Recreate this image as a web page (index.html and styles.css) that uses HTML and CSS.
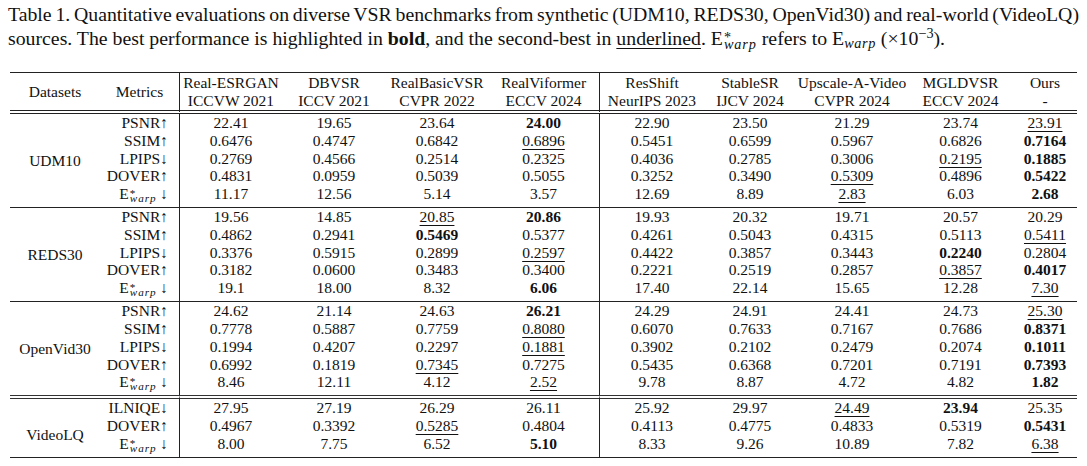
FILE: index.html
```html
<!DOCTYPE html>
<html>
<head>
<meta charset="utf-8">
<link rel="stylesheet" href="styles.css">
</head>
<body>
<div class="caption">
  <div class="cap-l1">Table 1. Quantitative evaluations on diverse VSR benchmarks from synthetic (UDM10, REDS30, OpenVid30) and real-world (VideoLQ)</div>
  <div class="cap-l2">sources. The best performance is highlighted in <b>bold</b>, and the second-best in <span class="u">underlined</span>. <span class="ew">E<span class="ss"><span class="sp">*</span><span class="sb">warp</span></span></span> refers to E<span class="sbi">warp</span> (×10<sup class="exp">−3</sup>).</div>
</div>

<table class="res">
  <colgroup>
    <col class="c-ds"><col class="c-mt"><col class="c1"><col class="c2"><col class="c3"><col class="c4"><col class="c5"><col class="c6"><col class="c7"><col class="c8"><col class="c9">
  </colgroup>
  <thead>
    <tr>
      <th>Datasets</th><th class="vr">Metrics</th>
      <th>Real-ESRGAN<br>ICCVW 2021</th><th>DBVSR<br>ICCV 2021</th><th>RealBasicVSR<br>CVPR 2022</th><th class="vr">RealViformer<br>ECCV 2024</th>
      <th>ResShift<br>NeurIPS 2023</th><th>StableSR<br>IJCV 2024</th><th>Upscale-A-Video<br>CVPR 2024</th><th>MGLDVSR<br>ECCV 2024</th><th>Ours<br>-</th>
    </tr>
  </thead>
  <tbody class="grp first">
    <tr><td rowspan="5" class="ds">UDM10</td><td class="mt">PSNR↑</td><td>22.41</td><td>19.65</td><td>23.64</td><td class="vr b">24.00</td><td>22.90</td><td>23.50</td><td>21.29</td><td>23.74</td><td><span class="u">23.91</span></td></tr>
    <tr><td class="mt">SSIM↑</td><td>0.6476</td><td>0.4747</td><td>0.6842</td><td class="vr"><span class="u">0.6896</span></td><td>0.5451</td><td>0.6599</td><td>0.5967</td><td>0.6826</td><td class="b">0.7164</td></tr>
    <tr><td class="mt">LPIPS↓</td><td>0.2769</td><td>0.4566</td><td>0.2514</td><td class="vr">0.2325</td><td>0.4036</td><td>0.2785</td><td>0.3006</td><td><span class="u">0.2195</span></td><td class="b">0.1885</td></tr>
    <tr><td class="mt">DOVER↑</td><td>0.4831</td><td>0.0959</td><td>0.5039</td><td class="vr">0.5055</td><td>0.3252</td><td>0.3490</td><td><span class="u">0.5309</span></td><td>0.4896</td><td class="b">0.5422</td></tr>
    <tr class="er"><td class="mt"><span class="ew">E<span class="ss"><span class="sp">*</span><span class="sb">warp</span></span></span> ↓</td><td>11.17</td><td>12.56</td><td>5.14</td><td class="vr">3.57</td><td>12.69</td><td>8.89</td><td><span class="u">2.83</span></td><td>6.03</td><td class="b">2.68</td></tr>
  </tbody>
  <tbody class="grp">
    <tr><td rowspan="5" class="ds">REDS30</td><td class="mt">PSNR↑</td><td>19.56</td><td>14.85</td><td><span class="u">20.85</span></td><td class="vr b">20.86</td><td>19.93</td><td>20.32</td><td>19.71</td><td>20.57</td><td>20.29</td></tr>
    <tr><td class="mt">SSIM↑</td><td>0.4862</td><td>0.2941</td><td class="b">0.5469</td><td class="vr">0.5377</td><td>0.4261</td><td>0.5043</td><td>0.4315</td><td>0.5113</td><td><span class="u">0.5411</span></td></tr>
    <tr><td class="mt">LPIPS↓</td><td>0.3376</td><td>0.5915</td><td>0.2899</td><td class="vr"><span class="u">0.2597</span></td><td>0.4422</td><td>0.3857</td><td>0.3443</td><td class="b">0.2240</td><td>0.2804</td></tr>
    <tr><td class="mt">DOVER↑</td><td>0.3182</td><td>0.0600</td><td>0.3483</td><td class="vr">0.3400</td><td>0.2221</td><td>0.2519</td><td>0.2857</td><td><span class="u">0.3857</span></td><td class="b">0.4017</td></tr>
    <tr class="er"><td class="mt"><span class="ew">E<span class="ss"><span class="sp">*</span><span class="sb">warp</span></span></span> ↓</td><td>19.1</td><td>18.00</td><td>8.32</td><td class="vr b">6.06</td><td>17.40</td><td>22.14</td><td>15.65</td><td>12.28</td><td><span class="u">7.30</span></td></tr>
  </tbody>
  <tbody class="grp">
    <tr><td rowspan="5" class="ds">OpenVid30</td><td class="mt">PSNR↑</td><td>24.62</td><td>21.14</td><td>24.63</td><td class="vr b">26.21</td><td>24.29</td><td>24.91</td><td>24.41</td><td>24.73</td><td><span class="u">25.30</span></td></tr>
    <tr><td class="mt">SSIM↑</td><td>0.7778</td><td>0.5887</td><td>0.7759</td><td class="vr"><span class="u">0.8080</span></td><td>0.6070</td><td>0.7633</td><td>0.7167</td><td>0.7686</td><td class="b">0.8371</td></tr>
    <tr><td class="mt">LPIPS↓</td><td>0.1994</td><td>0.4207</td><td>0.2297</td><td class="vr"><span class="u">0.1881</span></td><td>0.3902</td><td>0.2102</td><td>0.2479</td><td>0.2074</td><td class="b">0.1011</td></tr>
    <tr><td class="mt">DOVER↑</td><td>0.6992</td><td>0.1819</td><td><span class="u">0.7345</span></td><td class="vr">0.7275</td><td>0.5435</td><td>0.6368</td><td>0.7201</td><td>0.7191</td><td class="b">0.7393</td></tr>
    <tr class="er"><td class="mt"><span class="ew">E<span class="ss"><span class="sp">*</span><span class="sb">warp</span></span></span> ↓</td><td>8.46</td><td>12.11</td><td>4.12</td><td class="vr"><span class="u">2.52</span></td><td>9.78</td><td>8.87</td><td>4.72</td><td>4.82</td><td class="b">1.82</td></tr>
  </tbody>
  <tbody class="grp lq">
    <tr><td rowspan="3" class="ds lqds">VideoLQ</td><td class="mt">ILNIQE↓</td><td>27.95</td><td>27.19</td><td>26.29</td><td class="vr">26.11</td><td>25.92</td><td>29.97</td><td><span class="u">24.49</span></td><td class="b">23.94</td><td>25.35</td></tr>
    <tr><td class="mt">DOVER↑</td><td>0.4967</td><td>0.3392</td><td><span class="u">0.5285</span></td><td class="vr">0.4804</td><td>0.4113</td><td>0.4775</td><td>0.4833</td><td>0.5319</td><td class="b">0.5431</td></tr>
    <tr class="er"><td class="mt"><span class="ew">E<span class="ss"><span class="sp">*</span><span class="sb">warp</span></span></span> ↓</td><td>8.00</td><td>7.75</td><td>6.52</td><td class="vr b">5.10</td><td>8.33</td><td>9.26</td><td>10.89</td><td>7.82</td><td><span class="u">6.38</span></td></tr>
  </tbody>
</table>
</body>
</html>
```

FILE: styles.css
```css
html, body {
  margin: 0;
  padding: 0;
  background: #ffffff;
}
body {
  font-family: "Liberation Serif", "Times New Roman", serif;
  color: #111;
}

/* caption */
.caption {
  padding: 3px 8px 0 8px;
  font-size: 19.8px;
  width: 1071px;
}
.cap-l1,
.cap-l2 {
  height: 23.5px;
  line-height: 23.5px;
  white-space: nowrap;
}
.cap-l1 {
  text-align: justify;
  text-align-last: justify;
  word-spacing: -2px;
}
.u {
  text-decoration: underline;
  text-decoration-thickness: 1px;
  text-underline-offset: 3px;
}
.sbi {
  font-style: italic;
  font-size: 0.72em;
  vertical-align: -0.22em;
  line-height: 0;
  letter-spacing: 0.6px;
}
.exp {
  font-size: 0.72em;
  vertical-align: 0.5em;
  line-height: 0;
}

/* E*_warp stacked scripts */
.ew {
  display: inline-block;
  white-space: nowrap;
  text-align: left;
}
.ss {
  display: inline-flex;
  flex-direction: column;
  align-items: flex-start;
  vertical-align: 0.13em;
  margin-left: 1px;
  text-align: left;
}
.sp {
  font-size: 0.72em;
  line-height: 0;
}
.sb {
  font-style: italic;
  font-size: 0.72em;
  line-height: 1em;
  letter-spacing: 0.9px;
}

/* table */
.res {
  margin: 22px 0 0 10px;
  width: 1067px;
  table-layout: fixed;
  border-collapse: separate;
  border-spacing: 0;
  border-top: 1px solid #222;
  border-bottom: 1px solid #222;
  font-size: 15.5px;
  color: #111;
}
.c-ds { width: 90px; }
.c-mt { width: 80px; }
.c1 { width: 102px; }
.c2 { width: 104px; }
.c3 { width: 102px; }
.c4 { width: 112px; }
.c5 { width: 104px; }
.c6 { width: 92px; }
.c7 { width: 112px; }
.c8 { width: 105px; }
.c9 { width: 64px; }

.res th {
  font-weight: normal;
  line-height: 18px;
  padding: 1px 0 0 0;
  text-align: center;
  vertical-align: middle;
  border-bottom: 4px double #222;
  white-space: nowrap;
}
.res tbody tr {
  height: 17.8px;
}
.res tbody tr.er {
  height: 22px;
}
.res td {
  padding: 0;
  line-height: 17.7px;
  text-align: center;
  vertical-align: top;
  white-space: nowrap;
}
.res .vr {
  border-right: 1px solid #222;
}
.res td.mt {
  text-align: right;
  padding-right: 11px;
  border-right: 1px solid #222;
}
.res td.ds {
  vertical-align: middle;
  text-align: center;
}
.res td.lqds {
  padding-top: 14px;
}
.res .b {
  font-weight: bold;
}
.grp + .grp > tr:first-child > td {
  border-top: 1px solid #222;
}
.grp.lq > tr:first-child > td {
  border-top: 4px double #333;
}
```
